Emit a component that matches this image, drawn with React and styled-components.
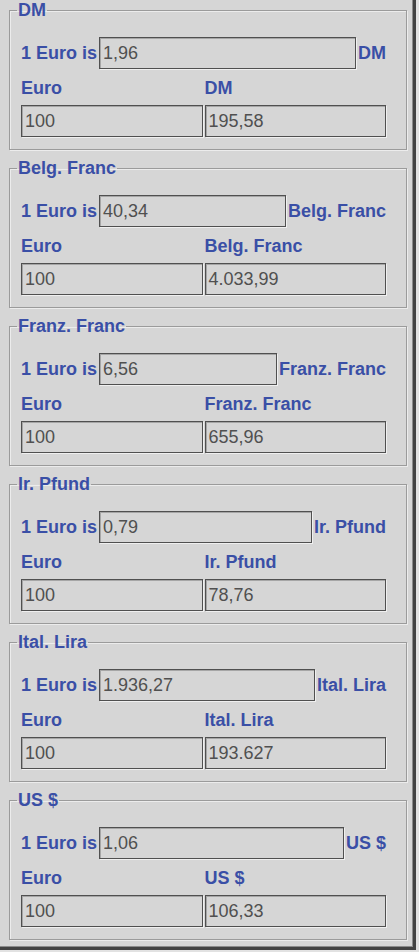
import React from 'react'
import styled, { createGlobalStyle } from 'styled-components'

const Global = createGlobalStyle`
  html, body {
    margin: 0;
    padding: 0;
    background: #e2e2e2;
  }
  body {
    font-family: "Liberation Sans", Arial, sans-serif;
  }
`

const Frame = styled.div`
  box-sizing: border-box;
  width: 416px;
  height: 950px;
  background: #d6d6d6;
  border-right: 3px solid #434343;
  border-bottom: 3px solid #434343;
  box-shadow: inset -1px -1px 0 #8c8c8c;
  overflow: hidden;
`

const Group = styled.fieldset`
  box-sizing: border-box;
  width: 398px;
  min-width: 0;
  margin: 0 0 8px 9px;
  padding: 17px 20px 12px 11px;
  border: 1px solid #9b9b9b;
  box-shadow: 1px 1px 0 #ececec, inset 1px 1px 0 #ececec;
`

const Title = styled.legend`
  margin-left: -4px;
  padding: 0 1px;
  font-size: 18px;
  line-height: 20px;
  font-weight: bold;
  color: #3a4fa6;
`

const Label = styled.span`
  font-size: 18px;
  line-height: 20px;
  font-weight: bold;
  color: #3a4fa6;
  white-space: nowrap;
`

const RateRow = styled.div`
  display: flex;
  align-items: center;
  gap: 2px;
  height: 32px;
  margin-bottom: 9px;
`

const Field = styled.div`
  box-sizing: border-box;
  height: 32px;
  flex: ${p => (p.$grow ? 1 : 'none')};
  min-width: 0;
  padding: 0 3px;
  display: flex;
  align-items: center;
  border: 1px solid #505050;
  box-shadow: inset 1px 1px 0 #a6a6a6, 1px 1px 0 #f0f0f0;
  background: #d6d6d6;
  font-size: 18px;
  color: #505050;
`

const Convert = styled.div`
  display: grid;
  grid-template-columns: 1fr 1fr;
  grid-template-rows: 20px 32px;
  column-gap: 2px;
  row-gap: 7px;
`

const currencies = [
  { name: 'DM', rate: '1,96', value: '195,58' },
  { name: 'Belg. Franc', rate: '40,34', value: '4.033,99' },
  { name: 'Franz. Franc', rate: '6,56', value: '655,96' },
  { name: 'Ir. Pfund', rate: '0,79', value: '78,76' },
  { name: 'Ital. Lira', rate: '1.936,27', value: '193.627' },
  { name: 'US $', rate: '1,06', value: '106,33' },
]

const CurrencyPanel = ({ name, rate, value }) => (
  <Group>
    <Title>{name}</Title>
    <RateRow>
      <Label>1 Euro is</Label>
      <Field $grow>{rate}</Field>
      <Label>{name}</Label>
    </RateRow>
    <Convert>
      <Label>Euro</Label>
      <Label>{name}</Label>
      <Field>100</Field>
      <Field>{value}</Field>
    </Convert>
  </Group>
)

const App = () => {
  return (
    <>
      <Global />
      <Frame>
        {currencies.map(c => (
          <CurrencyPanel key={c.name} {...c} />
        ))}
      </Frame>
    </>
  )
}

export default App
